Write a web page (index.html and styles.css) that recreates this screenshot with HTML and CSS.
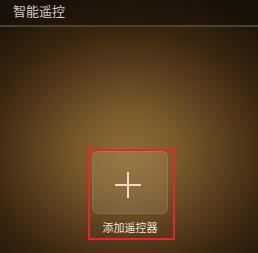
FILE: index.html
```html
<!DOCTYPE html>
<html lang="zh">
<head>
<meta charset="utf-8">
<link rel="stylesheet" href="styles.css">
</head>
<body>
<div class="page">
  <header class="bar">
    <h1 class="title">智能遥控</h1>
  </header>
  <main class="main">
    <div class="item">
      <div class="tile">
        <svg class="plus" width="28" height="28" viewBox="0 0 28 28">
          <path d="M14 1V27M1 14H27" stroke="#eadfc6" stroke-width="2" fill="none"/>
        </svg>
      </div>
      <div class="label">添加遥控器</div>
    </div>
  </main>
</div>
</body>
</html>
```
FILE: styles.css
```css
html, body {
  margin: 0;
  padding: 0;
}
body {
  width: 258px;
  height: 253px;
  overflow: hidden;
  font-family: "Noto Sans CJK SC", "Noto Sans", sans-serif;
}
.page {
  width: 258px;
  height: 253px;
  display: flex;
  flex-direction: column;
  background:
    radial-gradient(ellipse 195px 165px at 50% 60%, #8e6b37 0%, #7a5a2c 25%, #5a3e1e 50%, #38250f 75%, #20150a 100%);
}
.bar {
  height: 25px;
  border-bottom: 2px solid #4f3f2e;
  display: flex;
  align-items: center;
  padding-left: 13px;
  box-sizing: content-box;
  background: rgba(20,14,8,0.5);
}
.title {
  margin: 0;
  font-size: 13px;
  font-weight: normal;
  color: #cfc8c0;
  line-height: 16px;
  margin-top: -4px;
}
.main {
  flex: 1;
  display: flex;
  justify-content: center;
  align-items: flex-start;
  padding-left: 5px;
}
.item {
  margin-top: 122px;
  width: 87px;
  height: 91px;
  box-sizing: border-box;
  border: 2px solid #e8262a;
  padding: 0 5px 0 2px;
  display: flex;
  flex-direction: column;
  align-items: center;
}
.tile {
  width: 76px;
  height: 63px;
  border-radius: 6px;
  background: rgba(200,175,135,0.2);
  box-shadow: inset 0 0 0 1px rgba(230,210,170,0.12);
  display: flex;
  align-items: center;
  justify-content: center;
}
.plus {
  display: block;
  margin-left: -4px;
  margin-top: 4px;
}
.label {
  margin-top: 7px;
  font-size: 11px;
  line-height: 13px;
  color: #ece4d6;
}
```
